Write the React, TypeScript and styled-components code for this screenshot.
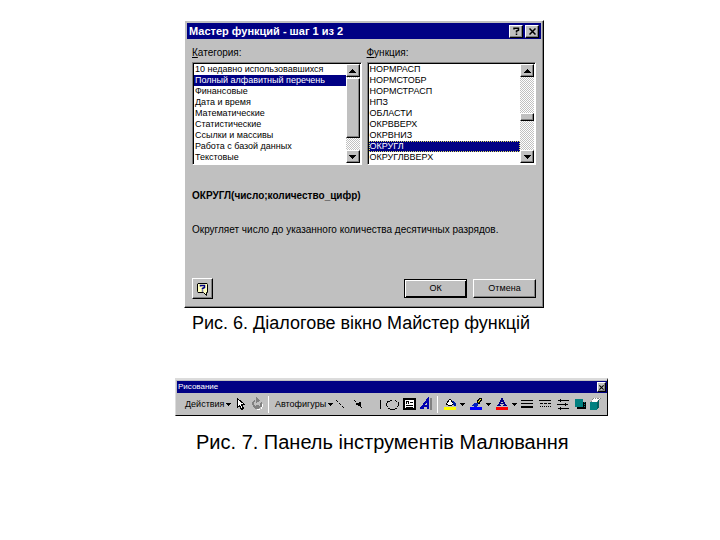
import React from "react";
import styled, { createGlobalStyle, css } from "styled-components";

const NAVY = "#000084";
const FACE = "#c0c0c0";

const GlobalStyle = createGlobalStyle`
  *, *::before, *::after { box-sizing: border-box; }
  body {
    margin: 0;
    background: #fff;
    color: #000;
    font-family: "Liberation Sans", Arial, sans-serif;
  }
`;

const raised = css`
  border: 1px solid;
  border-color: #fff #000 #000 #fff;
  box-shadow: inset -1px -1px 0 #808080;
  background: ${FACE};
`;

const Page = styled.main`
  padding: 20px 0;
`;

const Figure = styled.figure<{ $start: number; $width: string }>`
  width: ${(p) => p.$width};
  margin: 0 0 0 ${(p) => p.$start}px;
`;

const Caption = styled.figcaption<{ $size: number; $start: number; $top: number }>`
  padding: ${(p) => p.$top}px 0 0 ${(p) => p.$start}px;
  font-size: ${(p) => p.$size}px;
  line-height: 20px;
  white-space: nowrap;
`;

const Dialog = styled.section`
  ${raised}
  padding: 2px;
  font-size: 10px;
  line-height: 11px;
`;

const TitleBar = styled.header`
  display: flex;
  align-items: center;
  gap: 2px;
  height: 16px;
  padding: 0 2px;
  background: ${NAVY};
`;

const Title = styled.h1`
  flex: 1;
  margin: 0;
  color: #fff;
  font-size: 11px;
  line-height: 16px;
`;

const TitleButton = styled.button`
  ${raised}
  display: grid;
  place-items: center;
  width: 14px;
  height: 13px;
  padding: 0;
`;

const DialogBody = styled.div`
  padding: 8px 5px 6px;
`;

const Lists = styled.div`
  display: grid;
  grid-template-columns: 1fr 1fr;
  gap: 5px;
`;

const FieldLabel = styled.label`
  display: block;
  padding-bottom: 4px;
`;

const ListFrame = styled.div`
  display: flex;
  height: 103px;
  border: 1px solid;
  border-color: #808080 #fff #fff #808080;
  box-shadow: inset 1px 1px 0 #000;
  background: #fff;
  padding: 1px;
`;

const ListBox = styled.select<{ $focused?: boolean }>`
  flex: 1;
  min-width: 0;
  height: 99px;
  padding: 0;
  border: 0;
  outline: 0;
  border-radius: 0;
  background: #fff;
  color: #000;
  font: 9px/11px "Liberation Sans", Arial, sans-serif;
  overflow: hidden;
  scrollbar-width: none;

  option {
    height: 11px;
    min-height: 11px;
    padding: 0 1px;
    font-size: 9px;
    line-height: 11px;
  }
  option:checked {
    background: linear-gradient(${NAVY}, ${NAVY});
    color: #fff;
    -webkit-text-fill-color: #fff;
    ${(p) => p.$focused && "outline: 1px dotted #e0e060; outline-offset: -1px;"}
  }
`;

const ScrollBar = styled.div`
  display: flex;
  flex-direction: column;
  width: 14px;
  background: repeating-conic-gradient(#fff 0 25%, ${FACE} 0 50%) 0 0 / 2px 2px;
`;

const ScrollButton = styled.button`
  ${raised}
  display: grid;
  place-items: center;
  height: 13px;
  padding: 0;
`;

const Track = styled.div<{ $before: number; $thumb: number }>`
  flex: 1;
  display: grid;
  grid-template-rows: ${(p) => p.$before}fr ${(p) => p.$thumb}fr ${(p) => 73 - p.$before - p.$thumb}fr;
`;

const Thumb = styled.div`
  ${raised}
  grid-row: 2;
`;

const Syntax = styled.p`
  margin: 25px 0 0;
  font-size: 10px;
  font-weight: bold;
`;

const Description = styled.p`
  margin: 23px 0 0;
`;

const Actions = styled.footer`
  display: flex;
  align-items: center;
  gap: 6px;
  margin-top: 43px;
`;

const HelpButton = styled.button`
  ${raised}
  display: grid;
  place-items: center;
  width: 21px;
  height: 21px;
  margin-right: auto;
  padding: 0;
`;

const PushButton = styled.button<{ $primary?: boolean }>`
  ${raised}
  width: 63px;
  height: 19px;
  padding: 0;
  font: 9px/11px "Liberation Sans", Arial, sans-serif;
  ${(p) =>
    p.$primary &&
    css`
      border-color: #000;
      box-shadow: inset 1px 1px 0 #fff, inset -1px -1px 0 #000;
    `}
`;

const Palette = styled.section`
  margin-top: 45px;
  border: 1px solid;
  border-color: #dcdcdc #000 #000 #dcdcdc;
  border-top-width: 2px;
  background: ${FACE};
  padding: 1px 0 0 1px;
`;

const PaletteTitle = styled.header`
  display: flex;
  align-items: center;
  justify-content: space-between;
  height: 12px;
  padding: 0 1px;
  background: ${NAVY};
  color: #fff;
  font-size: 8px;
  line-height: 12px;
`;

const CloseButton = styled.button`
  ${raised}
  display: grid;
  place-items: center;
  width: 9px;
  height: 10px;
  padding: 0;
`;

const Tools = styled.div`
  display: flex;
  align-items: center;
  height: 22px;
  padding: 0 7px 0 8px;
`;

const Tool = styled.button<{ $w: number }>`
  display: flex;
  align-items: center;
  flex: none;
  width: ${(p) => p.$w}px;
  height: 18px;
  padding: 0;
  border: 0;
  background: transparent;
  color: #000;
  font: 9px/12px "Liberation Sans", Arial, sans-serif;
  white-space: nowrap;
`;

const Arrow = styled.svg`
  margin-left: 2px;
  flex: none;
`;

const Separator = styled.div`
  flex: none;
  width: 1px;
  height: 17px;
  margin-right: 6px;
  background: #fff;
`;

const Drop = () => (
  <Arrow width="5" height="3" viewBox="0 0 5 3" shapeRendering="crispEdges">
    <path d="M0 0h5v1H4v1H3v1H2V2H1V1H0z" />
  </Arrow>
);

const Cross = ({ size = 7 }: { size?: number }) => (
  <svg width={size} height={size} viewBox="0 0 7 7">
    <path d="M.5.5l6 6M6.5.5l-6 6" stroke="#000" strokeWidth="1.5" />
  </svg>
);

const Chevron = ({ up }: { up?: boolean }) => (
  <svg width="7" height="4" viewBox="0 0 7 4" shapeRendering="crispEdges">
    <path d={up ? "M3 0h1v1h1v1h1v1h1v1H0V3h1V2h1V1h1z" : "M0 0h7v1H6v1H5v1H4v1H3V3H2V2H1V1H0z"} />
  </svg>
);

type IconProps = { w?: number; children: React.ReactNode };
const Icon = ({ w = 14, children }: IconProps) => (
  <svg width={w} height="14" viewBox={`0 0 ${w} 14`} fill="none" stroke="#000" shapeRendering="crispEdges">
    {children}
  </svg>
);

const categories = [
  "10 недавно использовавшихся",
  "Полный алфавитный перечень",
  "Финансовые",
  "Дата и время",
  "Математические",
  "Статистические",
  "Ссылки и массивы",
  "Работа с базой данных",
  "Текстовые",
];

const functions = [
  "НОРМРАСП",
  "НОРМСТОБР",
  "НОРМСТРАСП",
  "НПЗ",
  "ОБЛАСТИ",
  "ОКРВВЕРХ",
  "ОКРВНИЗ",
  "ОКРУГЛ",
  "ОКРУГЛВВЕРХ",
];

type ListProps = {
  id: string;
  mnemonic: string;
  rest: string;
  items: string[];
  selected: string;
  before: number;
  thumb: number;
  focused?: boolean;
};

const ListField = ({ id, mnemonic, rest, items, selected, before, thumb, focused }: ListProps) => (
  <div>
    <FieldLabel htmlFor={id}>
      <u>{mnemonic}</u>
      {rest}
    </FieldLabel>
    <ListFrame>
      <ListBox id={id} size={9} defaultValue={selected} $focused={focused}>
        {items.map((item) => (
          <option key={item}>{item}</option>
        ))}
      </ListBox>
      <ScrollBar>
        <ScrollButton aria-label="Вверх"><Chevron up /></ScrollButton>
        <Track $before={before} $thumb={thumb}><Thumb /></Track>
        <ScrollButton aria-label="Вниз"><Chevron /></ScrollButton>
      </ScrollBar>
    </ListFrame>
  </div>
);

export default function App() {
  return (
    <Page>
      <GlobalStyle />
      <Figure $start={184} $width="50%">
        <Dialog aria-label="Мастер функций">
          <TitleBar>
            <Title>Мастер функций - шаг 1 из 2</Title>
            <TitleButton aria-label="Справка">
              <svg width="7" height="8" viewBox="0 0 7 8" fill="none" stroke="#000" strokeWidth="1.5">
                <path d="M1 2.5V1.2h4.5v2L3.5 4v1.5M3.5 6.5V8" />
              </svg>
            </TitleButton>
            <TitleButton aria-label="Закрыть"><Cross /></TitleButton>
          </TitleBar>
          <DialogBody>
            <Lists>
              <ListField id="category" mnemonic="К" rest="атегория:" items={categories}
                selected="Полный алфавитный перечень" before={1} thumb={60} />
              <ListField id="function" mnemonic="Ф" rest="ункция:" items={functions}
                selected="ОКРУГЛ" before={36} thumb={8} focused />
            </Lists>
            <Syntax>ОКРУГЛ(число;количество_цифр)</Syntax>
            <Description>Округляет число до указанного количества десятичных разрядов.</Description>
            <Actions>
              <HelpButton aria-label="Помощник">
                <svg width="13" height="14" viewBox="0 0 13 14">
                  <path d="M2 1.500h9l.5 1v8h-1v3l-3-3H2l-.5-1V2z" fill="#ffffc0" stroke="#000" />
                  <path d="M4.500 4.500v-1h4v2l-2 1v1M6.500 8.500v1" fill="none" stroke="#000084" strokeWidth="1.500" />
                </svg>
              </HelpButton>
              <PushButton $primary>ОК</PushButton>
              <PushButton>Отмена</PushButton>
            </Actions>
          </DialogBody>
        </Dialog>
        <Caption $size={18} $start={8} $top={5}>Рис. 6. Діалогове вікно Майстер функцій</Caption>
      </Figure>

      <Figure $start={175} $width="calc(60% + 1px)">
        <Palette aria-label="Рисование">
          <PaletteTitle>
            Рисование
            <CloseButton aria-label="Закрыть"><Cross size={5} /></CloseButton>
          </PaletteTitle>
          <Tools>
            <Tool $w={51}>Действия<Drop /></Tool>
            <Tool $w={15} aria-label="Выбор объектов">
              <Icon><path d="M1.500 1.500v9l2-2 2 4 2-1-2-4h3z" fill="#fff" /></Icon>
            </Tool>
            <Tool $w={17} aria-label="Свободное вращение">
              <Icon>
                <path d="M4 3.500a4 4 0 1 0 6 2" stroke="#808080" strokeWidth="2" />
                <path d="M5 0l4 3.500-4 3zM5 8h3v2H5z" fill="#808080" stroke="none" />
                <path d="M6 13c3 0 6-2 6-6" stroke="#fff" />
              </Icon>
            </Tool>
            <Separator />
            <Tool $w={59}>Автофигуры<Drop /></Tool>
            <Tool $w={18} aria-label="Линия">
              <Icon><path d="M2 3l8 8" strokeDasharray="3 1" /></Icon>
            </Tool>
            <Tool $w={27} aria-label="Стрелка">
              <Icon>
                <path d="M2 3l8 8" strokeDasharray="3 1" />
                <path d="M4 6h3V5h2v5H8V9H6V8H4z" fill="#000" stroke="none" />
              </Icon>
            </Tool>
            <Tool $w={7} aria-label="Прямоугольник">
              <Icon w={3}><path d="M1.500 3v9" /></Icon>
            </Tool>
            <Tool $w={17} aria-label="Овал">
              <Icon>
                <path d="M4 3h2M9 3h1M2 4h2M10 4h1M1.500 4v2M.5 6v3M1.500 9v1M2 11h2M4 12h5M9 11h2M11.500 9v1M12.500 5v4" />
              </Icon>
            </Tool>
            <Tool $w={17} aria-label="Надпись">
              <Icon>
                <path d="M1 2h11v10H1z" fill="#fff" strokeWidth="2" />
                <path d="M3 8.500h7M3 10.500h7M7 5.500h3M3.500 7V4.500h2V7" />
              </Icon>
            </Tool>
            <Tool $w={17} aria-label="Объект WordArt">
              <Icon>
                <path d="M10 1h2v12h-2z" fill="#808080" stroke="none" />
                <path d="M0 11h4M2 10l6-8v10M4 8.500h4" stroke="#0000b0" strokeWidth="2" />
              </Icon>
            </Tool>
            <Separator />
            <Tool $w={26} aria-label="Цвет заливки">
              <Icon>
                <path d="M2 7l4-5 4 5-4 2z" fill="#fff" />
                <path d="M8 4h2l2 3v2h-2z" fill="#0020a0" stroke="none" />
                <path d="M0 10h12v3H0z" fill="#ff0" stroke="none" />
              </Icon>
              <Drop />
            </Tool>
            <Tool $w={26} aria-label="Цвет линий">
              <Icon>
                <path d="M7 5l3-4 2 1-3 5z" fill="#404040" />
                <path d="M2 9l2-3h4v2l-2 2z" fill="#0020c0" stroke="none" />
                <path d="M8 5l3-3" stroke="#ff0" />
                <path d="M0 10h12v3H0z" fill="#00f" stroke="none" />
              </Icon>
              <Drop />
            </Tool>
            <Tool $w={25} aria-label="Цвет шрифта">
              <Icon>
                <path d="M1 8.500h4M7 8.500h4M3 8l3-6 3 6M4 6.500h4" stroke="#000084" strokeWidth="1.500" />
                <path d="M0 10h12v3H0z" fill="red" stroke="none" />
              </Icon>
              <Drop />
            </Tool>
            <Tool $w={18} aria-label="Тип линии">
              <Icon><path d="M0 3.500h12M0 6.500h12" /><path d="M0 10h12" strokeWidth="2" /></Icon>
            </Tool>
            <Tool $w={18} aria-label="Тип штриха">
              <Icon><path d="M0 3.500h12" /><path d="M1 6.500h11" strokeDasharray="3 1" /><path d="M1 9.500h11" strokeDasharray="1 1" /></Icon>
            </Tool>
            <Tool $w={17} aria-label="Вид стрелки">
              <Icon><path d="M1 3.500h11M0 7.500h11M1 11.500h11M3.500 2v3M8.500 6v3M3.500 10v3" /></Icon>
            </Tool>
            <Tool $w={15} aria-label="Тень">
              <Icon>
                <path d="M3 5h9v7H3z" fill="#000" stroke="none" />
                <path d="M1 2h8v8H1z" fill="#008080" stroke="none" />
                <path d="M10.500 5v6" stroke="#008080" strokeDasharray="1 1" />
              </Icon>
            </Tool>
            <Tool $w={13} aria-label="Объем">
              <Icon>
                <path d="M2 5l3-4h7l-3 4z" fill="#fff" stroke="#808080" strokeDasharray="2 1" />
                <path d="M1 5h8v8H1z" fill="#008080" stroke="none" />
                <path d="M9 5l2-3v8l-2 3z" fill="#006060" stroke="none" />
              </Icon>
            </Tool>
          </Tools>
        </Palette>
        <Caption $size={20} $start={21} $top={16}>Рис. 7. Панель інструментів Малювання</Caption>
      </Figure>
    </Page>
  );
}
